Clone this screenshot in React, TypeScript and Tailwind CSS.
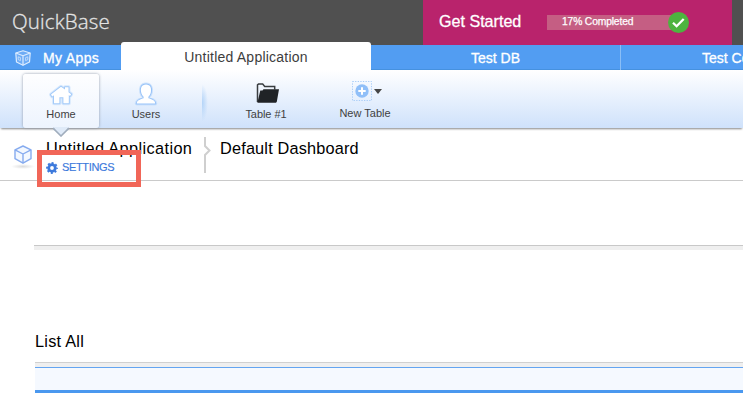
import React from "react";

function Cube({ className }: { className: string }) {
  return (
    <svg className={className} viewBox="0 0 18 19" fill="#f3f8ff" stroke="#86abef" strokeWidth="1.4" strokeLinejoin="round">
      <path d="M9 1 17 4.8V13.7L9 18.2 1 13.7V4.8Z" />
      <path d="M1 4.8 9 9 17 4.8M9 9V18" fill="none" />
    </svg>
  );
}

function Header() {
  return (
    <header className="flex h-[45px] justify-between bg-[#505050] text-white">
      <div className="pl-3 pt-[7px] font-['Open_Sans',sans-serif] text-[20.5px] leading-[29px] font-light tracking-[0.15px] text-[#e8e8e8] [-webkit-text-stroke:0.3px_#e0e0e0]">
        QuickBase
      </div>
      <div className="mr-[11px] flex w-[309px] bg-[#b9236c] pl-4">
        <span className="w-[108px] whitespace-nowrap pt-[11px] text-[16.1px] leading-5 [-webkit-text-stroke:0.3px_white]">Get Started</span>
        <div className="mt-[15px] flex h-[15px] w-[131px] bg-[#c55e83]">
          <span className="w-[121px] shrink-0 whitespace-nowrap pl-[15px] text-[10.3px] leading-[14px] tracking-[-0.15px] [-webkit-text-stroke:0.25px_white]">17% Completed</span>
          <svg className="-mt-[3px] h-[21px] w-[21px] shrink-0" viewBox="0 0 21 21">
            <circle cx="10.5" cy="10.5" r="10.5" fill="#4db33f" />
            <path d="m5 10.7 3.6 3.5 7.1-7.2" fill="none" stroke="white" strokeWidth="2.3" />
          </svg>
        </div>
      </div>
    </header>
  );
}

function AppTabs() {
  return (
    <nav className="flex h-[25px] items-start border-b border-[#4691df] bg-[#529df2] text-[14px] text-white">
      <div className="flex h-[25px] w-[121px] items-center whitespace-nowrap pl-[15px] pt-px tracking-[0.35px] [-webkit-text-stroke:0.3px_white]">
        <svg className="mr-3 h-4 w-4" viewBox="0 0 16 16" fill="none" stroke="#dcecff" strokeWidth="1.2" strokeLinejoin="round">
          <path d="M8 .8 15.2 3 14.5 12 8 15.3 1.5 12 .8 3Z" fill="#6eacf5" />
          <path d="M.8 3 8 5.7 15.2 3M8 5.7v9.6" />
          <path d="m3.2 6.8 2.2.8v3l-2.2-1ZM12.8 6.8l-2.2.8v3l2.2-1Z" strokeWidth=".7" />
        </svg>
        My Apps
      </div>
      <div className="-mt-[3px] h-7 w-[250px] whitespace-nowrap rounded-t-[3px] bg-white text-center text-[14px] leading-[31px] tracking-[0.22px] text-[#3d3d3d]">
        Untitled Application
      </div>
      <div className="h-[25px] w-[249px] text-center leading-[26px] [-webkit-text-stroke:0.3px_white]">Test DB</div>
      <div className="h-[25px] w-[123px] overflow-hidden whitespace-nowrap border-l border-[#8abef6] pl-[81px] leading-[26px] [-webkit-text-stroke:0.3px_white]">
        Test Co
      </div>
    </nav>
  );
}

function Toolbar() {
  return (
    <div className="relative flex h-[58px] bg-linear-to-b from-white to-[#cfe2fb] pl-[23px] text-[11px] text-[#3f3f3f] shadow-[0_2px_2px_-1px_#858585]">
      <div className="relative mt-1 flex h-[54px] w-[76px] flex-col items-center rounded-[3px] bg-linear-to-b from-[#fefeff] to-[#edf4fe] pt-2 shadow-[0_0_3px_#909aa9]">
        <svg className="h-[25px] w-[26px] overflow-visible" viewBox="0 0 26 25" strokeLinejoin="round">
          <path d="M3 12.6 13 4.8l4 2.8V5.2h3.5v5l2.7 2-1.2 1.7-1.2-.8V21.3h-5.4v-6h-4v6H6V13.2l-1.8 1.2Z" fill="#b5d4f9" stroke="#d8e9fd" strokeWidth="4" />
          <path d="M3 12.6 13 4.8l4 2.8V5.2h3.5v5l2.7 2-1.2 1.7-1.2-.8V21.3h-5.4v-6h-4v6H6V13.2l-1.8 1.2Z" fill="white" stroke="#a3caf9" strokeWidth="2" paintOrder="stroke" />
        </svg>
        <span className="leading-[15px]">Home</span>
        <svg className="absolute -bottom-[9px] left-[30px] h-[10px] w-4" viewBox="0 0 16 10">
          <path d="M0 0h16L8 9Z" fill="#dfeaf8" />
          <path d="m0 1 8 8 8-8" fill="none" stroke="#a0adbd" strokeWidth="1.6" />
        </svg>
      </div>
      <div className="ml-[9px] flex w-[76px] flex-col items-center pt-3">
        <svg className="h-[25px] w-[26px] overflow-visible" viewBox="0 0 26 25" strokeLinejoin="round">
          <path d="M13 2.5c-4.5 0-5.6 3.7-4.9 7.5.4 2 1.2 3.6 2.5 4.7v1.6C7.5 17.3 4 18 3.7 21.5h18.6c-.3-3.5-3.8-4.2-6.9-5.2v-1.6c1.3-1.1 2.1-2.7 2.5-4.7.7-3.8-.4-7.5-4.9-7.5Z" fill="white" stroke="#cce2fc" strokeWidth="4" />
          <path d="M13 2.5c-4.5 0-5.6 3.7-4.9 7.5.4 2 1.2 3.6 2.5 4.7v1.6C7.5 17.3 4 18 3.7 21.5h18.6c-.3-3.5-3.8-4.2-6.9-5.2v-1.6c1.3-1.1 2.1-2.7 2.5-4.7.7-3.8-.4-7.5-4.9-7.5Z" fill="white" stroke="#97c2f8" strokeWidth="2" paintOrder="stroke" />
        </svg>
        <span className="leading-[15px]">Users</span>
      </div>
      <div className="ml-[18px] mt-[14px] h-[38px] w-[6px] bg-[radial-gradient(ellipse_at_left,#b3d4f8_0%,transparent_70%)]" />
      <div className="ml-5 flex w-[76px] flex-col items-center pt-3">
        <svg className="ml-px h-[25px] w-[26px]" viewBox="0 0 26 25">
          <path d="M3.5 20V2.8l1-.7h4.2l2 2.3h10v3.2" fill="none" stroke="#393d40" strokeWidth="1.5" />
          <path d="M6.3 8.6h2.2l1-1.3H25l-2.2 12.5-.8.9H3.4Z" fill="#202326" />
        </svg>
        <span className="whitespace-nowrap leading-[15px] tracking-[-0.05px]">Table #1</span>
      </div>
      <div className="ml-[22px] flex w-[78px] flex-col items-center pt-[11px]">
        <div className="flex h-[20px] items-center gap-[2px] pl-1">
          <svg className="h-5 w-5" viewBox="0 0 20 20">
            <rect x=".5" y=".5" width="19" height="19" fill="none" stroke="#a9cdf8" strokeDasharray="1.3 1.3" />
            <circle cx="10" cy="10" r="6.7" fill="#90bff8" />
            <path d="M10 6.3v7.4M6.3 10h7.4" stroke="white" strokeWidth="2" />
          </svg>
          <svg className="h-[5px] w-2" viewBox="0 0 8 5"><path d="M0 0h8L4 5Z" fill="#464646" /></svg>
        </div>
        <span className="mt-[5px] whitespace-nowrap leading-[14px]">New Table</span>
      </div>
    </div>
  );
}

function Gear() {
  return (
    <svg className="h-3 w-3" viewBox="0 0 12 12" fill="none" stroke="#3c79dc">
      <circle cx="6" cy="6" r="3.3" strokeWidth="2.8" />
      <circle cx="6" cy="6" r="5" strokeWidth="1.8" strokeDasharray="2 1.927" strokeDashoffset="1" />
    </svg>
  );
}

function Breadcrumb() {
  return (
    <section className="flex h-[53px] border-b border-[#cacaca] text-[16.3px] text-black">
      <div className="w-[46px] pl-[14px] pt-[17px]">
        <Cube className="h-[19px] w-[18px]" />
        <div className="-ml-[3px] h-[5px] w-6 bg-[radial-gradient(ellipse,#dcdcdc_0%,transparent_70%)]" />
      </div>
      <div className="relative w-[157px] pt-[10px]">
        <div className="whitespace-nowrap leading-5 tracking-[0.39px]">Untitled Application</div>
        <div className="absolute -left-[9px] top-[22px] flex h-[37px] w-[104px] items-start gap-1 border-5 border-[#f16658] pl-1 pt-1 text-[11px] text-[#3c79dc]">
          <div className="pt-[3px]"><Gear /></div>
          <span className="leading-4 tracking-[-0.35px] [-webkit-text-stroke:0.15px_#3c79dc]">SETTINGS</span>
        </div>
      </div>
      <svg className="mt-[9px] h-9 w-2" viewBox="0 0 8 36" fill="none" stroke="#cfcfcf" strokeWidth="2">
        <path d="M2 0v9l4.5 4.5L2 18v18" />
      </svg>
      <div className="whitespace-nowrap pl-[9px] pt-[10px] leading-5 tracking-[0.18px]">Default Dashboard</div>
    </section>
  );
}

export default function App() {
  return (
    <div className="h-[409px] w-[743px] overflow-hidden bg-white font-['Liberation_Sans',Arial,sans-serif]">
      <Header />
      <AppTabs />
      <Toolbar />
      <Breadcrumb />
      <main className="pt-16 text-black">
        <div className="ml-[34px] h-[5px] border-t border-[#c8c8c8] bg-[#efefef]" />
        <h2 className="ml-[35px] mt-[81px] text-[16.3px] leading-5 tracking-[0.25px]">List All</h2>
        <div className="ml-[35px] mt-[11px] h-[5px] border-t border-[#d0d0d0] bg-[#efefef]" />
        <div className="ml-[35px] h-px bg-[#64a5f1]" />
        <div className="ml-[35px] h-[25px] border-b-3 border-[#4a98ef] bg-[#f5f9ff]" />
      </main>
    </div>
  );
}
